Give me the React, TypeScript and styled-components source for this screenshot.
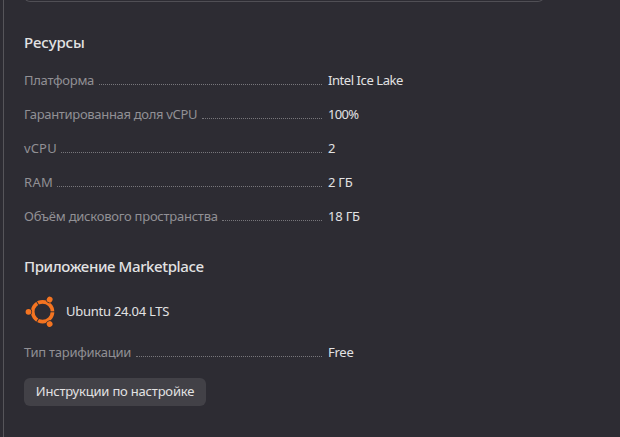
import React from 'react';
import styled, { createGlobalStyle } from 'styled-components';

const GlobalStyle = createGlobalStyle`
  * { box-sizing: border-box; }
  body {
    margin: 0;
    background: #2d2c33;
    color: #e2e2e3;
    font: 13px/18px "Noto Sans", "Open Sans", sans-serif;
    overflow: hidden;
  }
`;

const Page = styled.main`
  height: 437px;
  margin-left: 3px;
  padding-left: 20px;
  border-left: 1px solid #56555a;
  overflow: hidden;
`;

const PreviousCard = styled.div`
  width: 520px;
  height: 10px;
  margin-top: -8px;
  border: 1px solid #504f55;
  border-top: 0;
  border-radius: 0 0 6px 6px;
`;

const Title = styled.h2<{ $top: number; $tracking: number }>`
  margin: ${(p) => p.$top}px 0 0;
  font-size: 15px;
  line-height: 20px;
  font-weight: 500;
  letter-spacing: ${(p) => p.$tracking}px;
`;

const Properties = styled.dl<{ $top: number }>`
  display: flex;
  flex-direction: column;
  gap: 16px;
  margin: ${(p) => p.$top}px 0 0;
`;

const Property = styled.div`
  display: flex;
  height: 18px;
`;

const Term = styled.dt`
  display: flex;
  width: 298px;
  margin-right: 6px;
  color: #919095;
  white-space: nowrap;
`;

const TermText = styled.span<{ $width: number; $tracking: number }>`
  width: ${(p) => p.$width}px;
  letter-spacing: ${(p) => p.$tracking}px;
`;

const Leader = styled.span`
  flex: 1;
  height: 1px;
  margin-top: 13px;
  border-bottom: 1px dotted #77767b;
`;

const Value = styled.dd<{ $tracking: number }>`
  margin: 0;
  white-space: nowrap;
  letter-spacing: ${(p) => p.$tracking}px;
`;

const Product = styled.div`
  display: flex;
  align-items: center;
  gap: 10px;
  height: 32px;
  margin-top: 19px;
  letter-spacing: -0.25px;
`;

const Button = styled.button`
  display: flex;
  align-items: center;
  justify-content: center;
  width: 182px;
  height: 28px;
  margin-top: 17px;
  padding: 0 0 2px;
  border: 0;
  border-radius: 6px;
  background: #424147;
  color: #e2e2e3;
  font: inherit;
  letter-spacing: -0.2px;
  white-space: nowrap;
`;

type Item = { term: string; width: number; value: string; tracking?: number; valueTracking?: number };

const resources: Item[] = [
  { term: 'Платформа', width: 75, tracking: -0.28, value: 'Intel Ice Lake', valueTracking: -0.43 },
  { term: 'Гарантированная доля vCPU', width: 178, tracking: -0.32, value: '100%', valueTracking: -0.65 },
  { term: 'vCPU', width: 37, tracking: 0.15, value: '2' },
  { term: 'RAM', width: 33, tracking: 0.3, value: '2 ГБ', valueTracking: -0.25 },
  { term: 'Объём дискового пространства', width: 198, tracking: -0.25, value: '18 ГБ', valueTracking: -0.2 },
];

const pricing: Item[] = [
  { term: 'Тип тарификации', width: 112, tracking: -0.27, value: 'Free', valueTracking: -0.25 },
];

function PropertyList({ items, top }: { items: Item[]; top: number }) {
  return (
    <Properties $top={top}>
      {items.map((item) => (
        <Property key={item.term}>
          <Term>
            <TermText $width={item.width} $tracking={item.tracking ?? 0}>{item.term}</TermText>
            <Leader />
          </Term>
          <Value $tracking={item.valueTracking ?? 0}>{item.value}</Value>
        </Property>
      ))}
    </Properties>
  );
}

function UbuntuLogo() {
  return (
    <svg width="32" height="32" viewBox="0 0 32 32" aria-hidden="true">
      <circle cx="18.6" cy="16.8" r="9.9" fill="none" stroke="#f47421" strokeWidth="3.7" />
      {[0, 120, 240].map((angle) => (
        <g key={angle} transform={`rotate(${angle} 18.6 16.8)`}>
          <path d="M25 16.8h7" stroke="#2d2c33" strokeWidth="0.9" />
          <circle cx="4.5" cy="16.8" r="3.6" fill="#2d2c33" />
          <circle cx="4.5" cy="16.8" r="2.9" fill="#f47421" />
        </g>
      ))}
    </svg>
  );
}

export default function App() {
  return (
    <>
      <GlobalStyle />
      <Page>
        <PreviousCard />
        <Title $top={30} $tracking={-0.1}>Ресурсы</Title>
        <PropertyList items={resources} top={19} />
        <Title $top={31} $tracking={-0.39}>Приложение Marketplace</Title>
        <Product>
          <UbuntuLogo />
          <span>Ubuntu 24.04 LTS</span>
        </Product>
        <PropertyList items={pricing} top={16} />
        <Button type="button">Инструкции по настройке</Button>
      </Page>
    </>
  );
}
